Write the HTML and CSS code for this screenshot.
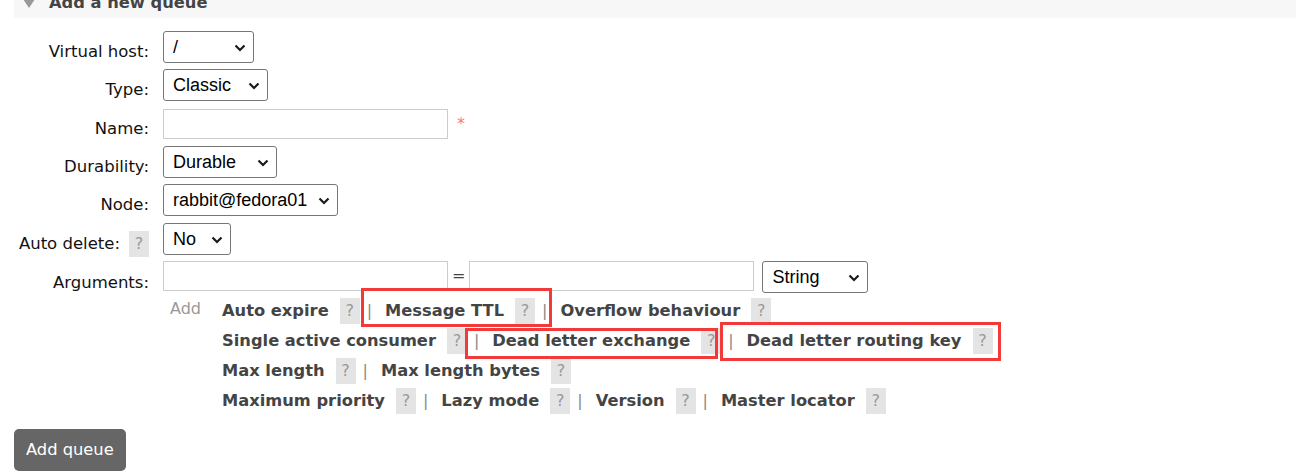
FILE: index.html
```html
<!DOCTYPE html>
<html>
<head>
<meta charset="utf-8">
<link rel="stylesheet" href="styles.css">
</head>
<body>
<div class="page">
  <div class="panel-head">
    <span class="tri"></span>
    <h2>Add a new queue</h2>
  </div>

  <div class="form">
    <label class="lbl">Virtual host:</label>
    <div class="ctl"><span class="sw w-vhost"><select class="sel"><option>/</option></select><svg class="chev" width="12" height="8" viewBox="0 0 12 8"><polyline points="1.5,1.5 6,6 10.5,1.5" fill="none" stroke="#1a1a1a" stroke-width="2.2"/></svg></span></div>

    <label class="lbl">Type:</label>
    <div class="ctl"><span class="sw w-type"><select class="sel"><option>Classic</option></select><svg class="chev" width="12" height="8" viewBox="0 0 12 8"><polyline points="1.5,1.5 6,6 10.5,1.5" fill="none" stroke="#1a1a1a" stroke-width="2.2"/></svg></span></div>

    <label class="lbl">Name:</label>
    <div class="ctl ctl-center"><input class="txt" type="text"><span class="req">*</span></div>

    <label class="lbl">Durability:</label>
    <div class="ctl"><span class="sw w-dur"><select class="sel"><option>Durable</option></select><svg class="chev" width="12" height="8" viewBox="0 0 12 8"><polyline points="1.5,1.5 6,6 10.5,1.5" fill="none" stroke="#1a1a1a" stroke-width="2.2"/></svg></span></div>

    <label class="lbl">Node:</label>
    <div class="ctl"><span class="sw w-node"><select class="sel"><option>rabbit@fedora01</option></select><svg class="chev" width="12" height="8" viewBox="0 0 12 8"><polyline points="1.5,1.5 6,6 10.5,1.5" fill="none" stroke="#1a1a1a" stroke-width="2.2"/></svg></span></div>

    <label class="lbl lbl-help">Auto delete:<span class="help">?</span></label>
    <div class="ctl"><span class="sw w-ad"><select class="sel"><option>No</option></select><svg class="chev" width="12" height="8" viewBox="0 0 12 8"><polyline points="1.5,1.5 6,6 10.5,1.5" fill="none" stroke="#1a1a1a" stroke-width="2.2"/></svg></span></div>

    <label class="lbl lbl-args">Arguments:</label>
    <div class="ctl ctl-args">
      <div class="arg-inputs">
        <input class="txt" type="text"><span class="eq">=</span><input class="txt" type="text"><span class="sw w-str"><select class="sel"><option>String</option></select><svg class="chev" width="12" height="8" viewBox="0 0 12 8"><polyline points="1.5,1.5 6,6 10.5,1.5" fill="none" stroke="#1a1a1a" stroke-width="2.2"/></svg></span>
      </div>
      <div class="args-extra">
        <span class="add">Add</span>
        <div class="arg-links">
          <div class="arg-row">
            <span class="arg">Auto expire</span><span class="help">?</span><span class="sep">|</span>
            <span class="arg">Message TTL</span><span class="help">?</span><span class="sep">|</span>
            <span class="arg">Overflow behaviour</span><span class="help">?</span>
          </div>
          <div class="arg-row">
            <span class="arg">Single active consumer</span><span class="help">?</span><span class="sep">|</span>
            <span class="arg">Dead letter exchange</span><span class="help">?</span><span class="sep">|</span>
            <span class="arg">Dead letter routing key</span><span class="help">?</span>
          </div>
          <div class="arg-row">
            <span class="arg">Max length</span><span class="help">?</span><span class="sep">|</span>
            <span class="arg">Max length bytes</span><span class="help">?</span>
          </div>
          <div class="arg-row">
            <span class="arg">Maximum priority</span><span class="help">?</span><span class="sep">|</span>
            <span class="arg">Lazy mode</span><span class="help">?</span><span class="sep">|</span>
            <span class="arg">Version</span><span class="help">?</span><span class="sep">|</span>
            <span class="arg">Master locator</span><span class="help">?</span>
          </div>
        </div>
      </div>
    </div>
  </div>

  <button class="btn">Add queue</button>

  <div class="annot annot-ttl"></div>
  <div class="annot annot-dlx"></div>
  <div class="annot annot-dlrk"></div>
</div>
</body>
</html>
```

FILE: styles.css
```css
html, body {
  margin: 0;
  padding: 0;
  background: #fff;
}
body {
  font-family: "DejaVu Sans", Verdana, sans-serif;
  font-size: 16.5px;
  color: #111;
}
.page {
  position: relative;
  width: 1296px;
  height: 473px;
  overflow: hidden;
}

/* header band */
.panel-head {
  margin-left: 14px;
  height: 18px;
  background: #f7f7f7;
  display: flex;
  align-items: flex-start;
  overflow: hidden;
}
.tri {
  width: 0;
  height: 0;
  margin: -1px 0 0 9px;
  border-left: 6px solid transparent;
  border-right: 6px solid transparent;
  border-top: 9px solid #999;
}
.panel-head h2 {
  margin: -6px 0 0 14px;
  font-size: 16.3px;
  line-height: 18px;
  font-weight: bold;
  color: #444;
}

/* form grid */
.form {
  margin-top: 13px;
  display: grid;
  grid-template-columns: 149px 1fr;
  grid-template-rows: repeat(6, 32px) auto;
  column-gap: 14px;
  row-gap: 6.33px;
}
.lbl {
  text-align: right;
  line-height: 32px;
  padding-top: 5px;
  white-space: nowrap;
}
.lbl-help {
  display: flex;
  justify-content: flex-end;
  align-items: baseline;
  gap: 9px;
}
.lbl-args {
  padding-top: 6px;
}
.ctl {
  display: flex;
  align-items: flex-start;
}
.ctl-center {
  align-items: center;
}
.ctl-args {
  flex-direction: column;
}

/* select with drawn chevron */
.sw {
  position: relative;
  display: inline-block;
  height: 32px;
  flex: none;
}
.sel {
  -webkit-appearance: none;
  appearance: none;
  display: block;
  width: 100%;
  font-family: "Liberation Sans", Arial, sans-serif;
  font-size: 18px;
  height: 32px;
  box-sizing: border-box;
  border: 1px solid #767676;
  border-radius: 3px;
  background: #fff;
  color: #000;
  padding: 0 0 0 9px;
  margin: 0;
}
.chev {
  position: absolute;
  right: 8px;
  top: 13px;
  pointer-events: none;
}
.w-vhost { width: 91px; }
.w-type { width: 105px; }
.w-dur { width: 114px; }
.w-node { width: 175px; }
.w-ad { width: 68px; }
.w-str { width: 106px; margin-left: 8px; }

.txt {
  width: 285px;
  height: 30px;
  box-sizing: border-box;
  border: 1px solid #ccc;
  margin: 0;
  padding: 0 4px;
  font-family: "Liberation Sans", Arial, sans-serif;
  font-size: 16px;
}
.req {
  color: #f77;
  margin-left: 9px;
  font-size: 16px;
  line-height: 20px;
}

.arg-inputs {
  display: flex;
  align-items: flex-start;
  height: 32px;
}
.eq {
  margin: 0 4px;
  line-height: 30px;
  font-size: 16px;
  color: #444;
}

.args-extra {
  display: flex;
  margin-top: 3px;
  padding-left: 7px;
}
.add {
  width: 52px;
  flex: none;
  color: #999;
  font-size: 16px;
  line-height: 26px;
}
.arg-row {
  display: flex;
  align-items: baseline;
  height: 30px;
  white-space: nowrap;
}
.arg {
  font-weight: bold;
  font-size: 16.3px;
  color: #444;
  line-height: 30px;
}
.help {
  display: inline-block;
  width: 20px;
  height: 26px;
  line-height: 26px;
  text-align: center;
  background: #e4e4e4;
  color: #999;
  font-weight: normal;
  font-size: 16px;
}
.arg + .help {
  margin-left: 11px;
}
.sep {
  color: #888;
  font-size: 16px;
  margin: 0 13px 0 7px;
  line-height: 30px;
}

.btn {
  display: block;
  margin: 13px 0 0 14px;
  height: 42px;
  padding: 0 12px;
  background: #666;
  color: #fff;
  border: none;
  border-radius: 5px;
  font-family: "DejaVu Sans", Verdana, sans-serif;
  font-size: 16.3px;
}

/* red annotation overlays */
.annot {
  position: absolute;
  border: 3px solid #f23a3a;
  box-sizing: border-box;
  pointer-events: none;
}
.annot-ttl {
  left: 361px;
  top: 288px;
  width: 191px;
  height: 39px;
}
.annot-dlx {
  left: 465px;
  top: 328px;
  width: 253px;
  height: 31px;
}
.annot-dlrk {
  left: 720px;
  top: 322px;
  width: 281px;
  height: 39px;
}
```
